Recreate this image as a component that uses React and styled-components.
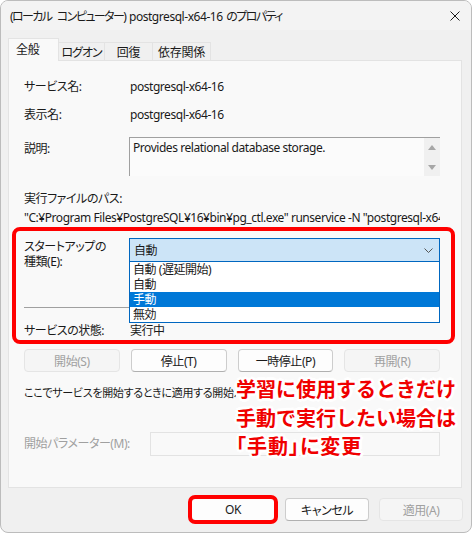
import React from "react";
import styled, { createGlobalStyle } from "styled-components";

const GlobalStyle = createGlobalStyle`
  body {
    margin: 0;
    background: #ffffff;
    font-family: "Noto Sans", "Noto Sans CJK JP", sans-serif;
    font-size: 12px;
    color: #1a1a1a;
  }
  * { box-sizing: border-box; }
`;

const Window = styled.div`
  width: 472px;
  height: 533px;
  border: 1px solid #bcbcbc;
  border-radius: 8px;
  background: #f0f0f0;
  overflow: hidden;
  display: flex;
  flex-direction: column;
  font-feature-settings: "palt";
  letter-spacing: -0.45px;
`;

const TitleBar = styled.div`
  height: 29px;
  background: #f3f3f3;
  display: flex;
  align-items: center;
  justify-content: space-between;
  padding: 0 10px 0 9px;
`;

const Title = styled.div`
  font-size: 12px;
  color: #1a1a1a;
  white-space: nowrap;
  word-spacing: 1px;
`;

const Narrow = styled.span`
  letter-spacing: -1.6px;
  word-spacing: 4px;
`;

const CloseIcon = styled.svg`
  width: 10px;
  height: 10px;
  margin-right: 1px;
`;

const Body = styled.div`
  padding: 9px 0 0 7px;
  display: flex;
  flex-direction: column;
`;

const TabStrip = styled.div`
  display: flex;
  align-items: flex-end;
  height: 22px;
  margin-bottom: -1px;
  position: relative;
  z-index: 1;
`;

const Tab = styled.div`
  width: ${({ w }) => w}px;
  height: ${({ active }) => (active ? 23 : 19)}px;
  background: ${({ active }) => (active ? "#f9f9f9" : "#f0f0f0")};
  border: 1px solid #e3e3e3;
  border-bottom: ${({ active }) => (active ? "none" : "1px solid #e3e3e3")};
  border-left: ${({ first }) => (first ? "1px solid #e3e3e3" : "none")};
  display: flex;
  align-items: center;
  justify-content: ${({ active }) => (active ? "flex-start" : "center")};
  padding-left: ${({ active }) => (active ? 7 : 0)}px;
  padding-bottom: ${({ active }) => (active ? 2 : 0)}px;
  font-size: 12px;
  color: #1a1a1a;
  white-space: nowrap;
  letter-spacing: ${({ tight }) => (tight ? "-1px" : "-0.2px")};
`;

const Panel = styled.div`
  width: 454px;
  height: 428px;
  background: #f9f9f9;
  border: 1px solid #e3e3e3;
  padding: 0 21px 0 15px;
  display: flex;
  flex-direction: column;
`;

const InfoRow = styled.div`
  display: grid;
  grid-template-columns: 105px 1fr;
  align-items: ${({ top }) => (top ? "start" : "center")};
  margin-top: ${({ mt }) => mt}px;
  line-height: 16px;
`;

const Label = styled.div`
  color: ${({ disabled }) => (disabled ? "#a0a0a0" : "#1a1a1a")};
  padding-top: ${({ pt }) => pt || 0}px;
  line-height: ${({ lh }) => lh || 16}px;
  white-space: nowrap;
`;

const Value = styled.div`
  padding-left: 1px;
  color: #1a1a1a;
`;

const DescBox = styled.div`
  height: 39px;
  display: flex;
  border-top: 1px solid #a0a0a0;
  border-left: 1px solid #a0a0a0;
  background: #fbfbfb;
`;

const DescText = styled.div`
  flex: 1;
  padding: 2px 0 0 3px;
  line-height: 16px;
`;

const ScrollTrack = styled.div`
  width: 16px;
  background: #f0f0f0;
  display: flex;
  flex-direction: column;
  align-items: center;
  justify-content: space-between;
  padding: 7px 0 6px;
`;

const Arrow = styled.svg`
  width: 8px;
  height: 5px;
`;

const PathLabel = styled.div`
  margin-top: ${({ mt }) => mt}px;
  line-height: 16px;
`;

const PathValue = styled.div`
  margin-top: 3px;
  line-height: 16px;
  white-space: nowrap;
  overflow: hidden;
`;

const StartupGroup = styled.div`
  position: relative;
  margin-top: 12px;
  display: flex;
  flex-direction: column;
`;

const Highlight = styled.div`
  position: absolute;
  top: -11px;
  left: -12px;
  right: -15px;
  bottom: -5px;
  border: 4px solid #ff0000;
  border-radius: 8px;
  pointer-events: none;
`;

const StartupRow = styled.div`
  display: grid;
  grid-template-columns: 105px 1fr;
  align-items: start;
  height: 30px;
`;

const ComboWrap = styled.div`
  position: relative;
  z-index: 2;
`;

const Combo = styled.div`
  height: 24px;
  background: #cce4f7;
  border: 1px solid #0067c0;
  display: flex;
  align-items: center;
  justify-content: space-between;
  padding: 0 6px 0 4px;
`;

const Chevron = styled.svg`
  width: 9px;
  height: 5px;
`;

const DropList = styled.div`
  position: absolute;
  top: 24px;
  left: 0;
  right: 0;
  background: #ffffff;
  border: 1px solid #0067c0;
  border-top: none;
`;

const DropItem = styled.div`
  height: 15px;
  line-height: 15px;
  padding-left: 3px;
  background: ${({ selected }) => (selected ? "#0078d7" : "transparent")};
  color: ${({ selected }) => (selected ? "#ffffff" : "#1a1a1a")};
`;

const Separator = styled.div`
  height: 1px;
  background: #a0a0a0;
  margin-top: 39px;
`;

const ButtonRow = styled.div`
  display: grid;
  grid-template-columns: repeat(4, 1fr);
  gap: 11px;
  margin-top: 10px;
`;

const Button = styled.button`
  height: 23px;
  width: ${({ w }) => (w ? `${w}px` : "auto")};
  border-radius: 4px;
  font-family: inherit;
  font-size: 12px;
  font-feature-settings: "palt";
  letter-spacing: -0.45px;
  padding: 0;
  background: ${({ disabled }) => (disabled ? "#f5f5f5" : "#fdfdfd")};
  color: ${({ disabled }) => (disabled ? "#a0a0a0" : "#1a1a1a")};
  border: 1px solid ${({ disabled }) => (disabled ? "#e5e5e5" : "#cdcdcd")};
  border-bottom-color: ${({ disabled }) => (disabled ? "#e5e5e5" : "#b0b0b0")};
  position: relative;
`;

const HintArea = styled.div`
  position: relative;
  margin-top: 13px;
`;

const Hint = styled.div`
  line-height: 16px;
  font-size: 11px;
  letter-spacing: -0.3px;
  white-space: nowrap;
  overflow: hidden;
`;

const Annotation = styled.div`
  position: absolute;
  left: 212px;
  top: -10px;
  display: flex;
  flex-direction: column;
  font-family: "Noto Sans CJK JP", sans-serif;
  font-weight: 700;
  font-size: 20px;
  line-height: 28.5px;
  letter-spacing: 0;
  color: #f00000;
  white-space: nowrap;
  font-feature-settings: normal;
  text-shadow:
    2px 0 0 #fff, -2px 0 0 #fff, 0 2px 0 #fff, 0 -2px 0 #fff,
    2px 2px 0 #fff, -2px -2px 0 #fff, 2px -2px 0 #fff, -2px 2px 0 #fff,
    3px 0 0 #fff, -3px 0 0 #fff, 0 3px 0 #fff, 0 -3px 0 #fff;
`;

const AnnoLine = styled.span`
  background: ${({ cover }) => (cover ? "#f9f9f9" : "transparent")};
  font-feature-settings: ${({ prop }) => (prop ? '"palt"' : "normal")};
  letter-spacing: ${({ prop }) => (prop ? "1px" : "0")};
  align-self: flex-start;
`;

const ParamRow = styled.div`
  display: grid;
  grid-template-columns: 126px 1fr;
  align-items: center;
  margin-top: 31px;
`;

const ParamInput = styled.div`
  height: 24px;
  border: 1px solid #e3e3e3;
  background: #f9f9f9;
`;

const Footer = styled.div`
  display: flex;
  justify-content: flex-end;
  gap: 10px;
  padding: 10px 8px 0 0;
`;

const OkFrame = styled.div`
  position: absolute;
  top: -4px;
  left: -4px;
  right: -4px;
  bottom: -4px;
  border: 4px solid #ff0000;
  border-radius: 7px;
  pointer-events: none;
`;

const tabs = [
  { label: "全般", w: 51, active: true },
  { label: "ログオン", w: 46, tight: true },
  { label: "回復", w: 48 },
  { label: "依存関係", w: 58 },
];

const startupOptions = ["自動 (遅延開始)", "自動", "手動", "無効"];

export default function App() {
  return (
    <>
      <GlobalStyle />
      <Window>
        <TitleBar>
          <Title>
            <Narrow>(ローカル コンピューター)</Narrow> postgresql-x64-16 <Narrow>のプロパティ</Narrow>
          </Title>
          <CloseIcon viewBox="0 0 10 10">
            <path d="M0.5 0.5 L9.5 9.5 M9.5 0.5 L0.5 9.5" stroke="#1a1a1a" strokeWidth="1" />
          </CloseIcon>
        </TitleBar>
        <Body>
          <TabStrip>
            {tabs.map((t, i) => (
              <Tab key={t.label} w={t.w} active={t.active} first={i === 0} tight={t.tight}>
                {t.label}
              </Tab>
            ))}
          </TabStrip>
          <Panel>
            <InfoRow mt={18}>
              <Label>サービス名:</Label>
              <Value>postgresql-x64-16</Value>
            </InfoRow>
            <InfoRow mt={12}>
              <Label>表示名:</Label>
              <Value>postgresql-x64-16</Value>
            </InfoRow>
            <InfoRow mt={14} top>
              <Label pt={4}>説明:</Label>
              <DescBox>
                <DescText>Provides relational database storage.</DescText>
                <ScrollTrack>
                  <Arrow viewBox="0 0 8 5">
                    <path d="M0 5 L4 0 L8 5 Z" fill="#a6a6a6" />
                  </Arrow>
                  <Arrow viewBox="0 0 8 5">
                    <path d="M0 0 L4 5 L8 0 Z" fill="#a6a6a6" />
                  </Arrow>
                </ScrollTrack>
              </DescBox>
            </InfoRow>
            <PathLabel mt={15}>実行ファイルのパス:</PathLabel>
            <PathValue>
              "C:¥Program Files¥PostgreSQL¥16¥bin¥pg_ctl.exe" runservice -N "postgresql-x64-16" -D "C:¥Program Files¥PostgreSQL¥16¥data" -w
            </PathValue>

            <StartupGroup>
              <StartupRow>
                <Label lh={15} pt={1}>
                  スタートアップの
                  <br />
                  種類(E):
                </Label>
                <ComboWrap>
                  <Combo>
                    <span>自動</span>
                    <Chevron viewBox="0 0 9 5">
                      <path d="M0.5 0.5 L4.5 4.5 L8.5 0.5" stroke="#555" strokeWidth="1" fill="none" />
                    </Chevron>
                  </Combo>
                  <DropList>
                    {startupOptions.map((o) => (
                      <DropItem key={o} selected={o === "手動"}>
                        {o}
                      </DropItem>
                    ))}
                  </DropList>
                </ComboWrap>
              </StartupRow>
              <Separator />
              <InfoRow mt={15}>
                <Label>サービスの状態:</Label>
                <Value>実行中</Value>
              </InfoRow>
              <Highlight />
            </StartupGroup>

            <ButtonRow>
              <Button disabled>開始(S)</Button>
              <Button>停止(T)</Button>
              <Button>一時停止(P)</Button>
              <Button disabled>再開(R)</Button>
            </ButtonRow>

            <HintArea>
              <Hint>ここでサービスを開始するときに適用する開始パラメーターを指定してください。</Hint>
              <Annotation>
                <AnnoLine cover>学習に使用するときだけ</AnnoLine>
                <AnnoLine>手動で実行したい場合は</AnnoLine>
                <AnnoLine prop>「手動」に変更</AnnoLine>
              </Annotation>
            </HintArea>

            <ParamRow>
              <Label disabled>開始パラメーター(M):</Label>
              <ParamInput />
            </ParamRow>
          </Panel>
          <Footer>
            <Button w={84}>
              OK
              <OkFrame />
            </Button>
            <Button w={84}>キャンセル</Button>
            <Button w={84} disabled>
              適用(A)
            </Button>
          </Footer>
        </Body>
      </Window>
    </>
  );
}
